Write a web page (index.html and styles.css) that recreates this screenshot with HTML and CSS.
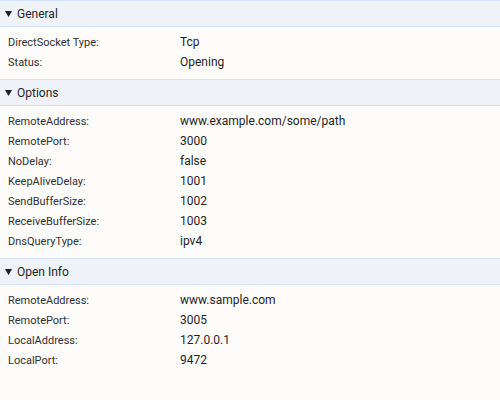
FILE: index.html
```html
<!DOCTYPE html>
<html>
<head>
<meta charset="utf-8">
<link rel="stylesheet" href="styles.css">
</head>
<body>
<section class="section">
  <div class="header"><svg class="arrow" width="7" height="6" viewBox="0 0 7 6"><path d="M0 0H7L3.5 6Z"/></svg>General</div>
  <div class="rows">
    <div class="row"><span class="key">DirectSocket Type:</span><span class="val">Tcp</span></div>
    <div class="row"><span class="key">Status:</span><span class="val">Opening</span></div>
  </div>
</section>
<section class="section">
  <div class="header"><svg class="arrow" width="7" height="6" viewBox="0 0 7 6"><path d="M0 0H7L3.5 6Z"/></svg>Options</div>
  <div class="rows">
    <div class="row"><span class="key">RemoteAddress:</span><span class="val">www.example.com/some/path</span></div>
    <div class="row"><span class="key">RemotePort:</span><span class="val">3000</span></div>
    <div class="row"><span class="key">NoDelay:</span><span class="val">false</span></div>
    <div class="row"><span class="key">KeepAliveDelay:</span><span class="val">1001</span></div>
    <div class="row"><span class="key">SendBufferSize:</span><span class="val">1002</span></div>
    <div class="row"><span class="key">ReceiveBufferSize:</span><span class="val">1003</span></div>
    <div class="row"><span class="key">DnsQueryType:</span><span class="val">ipv4</span></div>
  </div>
</section>
<section class="section">
  <div class="header"><svg class="arrow" width="7" height="6" viewBox="0 0 7 6"><path d="M0 0H7L3.5 6Z"/></svg>Open Info</div>
  <div class="rows">
    <div class="row"><span class="key">RemoteAddress:</span><span class="val">www.sample.com</span></div>
    <div class="row"><span class="key">RemotePort:</span><span class="val">3005</span></div>
    <div class="row"><span class="key">LocalAddress:</span><span class="val">127.0.0.1</span></div>
    <div class="row"><span class="key">LocalPort:</span><span class="val">9472</span></div>
  </div>
</section>
</body>
</html>
```
FILE: styles.css
```css
html, body {
  margin: 0;
  padding: 0;
  background: #fdfcfb;
  font-family: Roboto, "Liberation Sans", sans-serif;
  color: #1f1f1f;
}
.header {
  height: 25px;
  border-top: 1px solid #d3e3fd;
  border-bottom: 1px solid #d3e3fd;
  background: #eff3f8;
  display: flex;
  align-items: center;
  font-size: 12px;
  padding-left: 5px;
}
.arrow {
  flex: none;
  margin-right: 5px;
  fill: #1f1f1f;
}
.rows {
  padding: 5px 0 7px;
}
.row {
  height: 20px;
  display: flex;
  align-items: center;
}
.key {
  box-sizing: border-box;
  flex: none;
  width: 180px;
  padding-left: 8px;
  font-size: 11px;
  color: #303030;
}
.val {
  font-size: 12px;
}
```
